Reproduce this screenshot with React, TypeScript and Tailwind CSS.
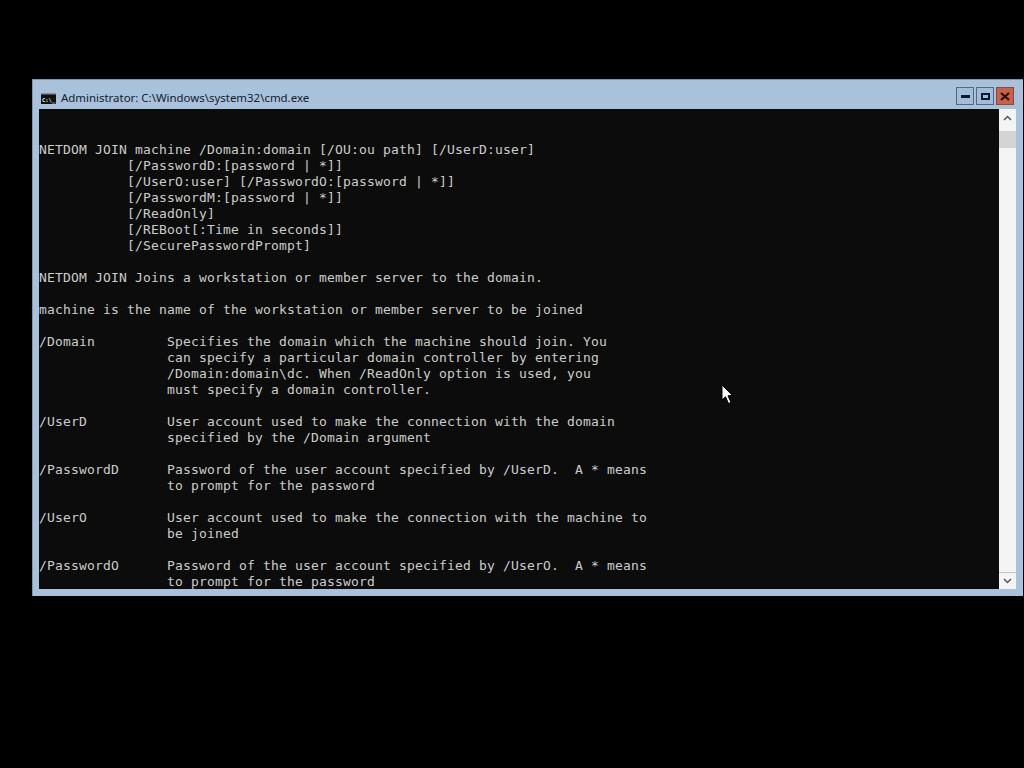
const consoleText = `

NETDOM JOIN machine /Domain:domain [/OU:ou path] [/UserD:user]
           [/PasswordD:[password | *]]
           [/UserO:user] [/PasswordO:[password | *]]
           [/PasswordM:[password | *]]
           [/ReadOnly]
           [/REBoot[:Time in seconds]]
           [/SecurePasswordPrompt]

NETDOM JOIN Joins a workstation or member server to the domain.

machine is the name of the workstation or member server to be joined

/Domain         Specifies the domain which the machine should join. You
                can specify a particular domain controller by entering
                /Domain:domain\\dc. When /ReadOnly option is used, you
                must specify a domain controller.

/UserD          User account used to make the connection with the domain
                specified by the /Domain argument

/PasswordD      Password of the user account specified by /UserD.  A * means
                to prompt for the password

/UserO          User account used to make the connection with the machine to
                be joined

/PasswordO      Password of the user account specified by /UserO.  A * means
                to prompt for the password`;

function CmdIcon() {
  return (
    <svg width="15" height="11" viewBox="0 0 15 11" className="shrink-0">
      <rect x="0" y="0" width="15" height="11" fill="#111" />
      <rect x="0" y="0" width="15" height="1.5" fill="#8a8f96" />
      <text x="1" y="8.5" fill="#e8e8e8" fontSize="5.5" fontFamily="'DejaVu Sans Mono', monospace" fontWeight="700">
        C:\_
      </text>
    </svg>
  );
}

function Cursor() {
  return (
    <svg width="14" height="22" viewBox="0 0 14 22" className="absolute left-[721px] top-[384px]">
      <path d="M1 1 L1 16 L4.5 12.8 L7.5 19.5 L10 18.4 L7 11.8 L11.5 11.5 Z" fill="#fff" stroke="#000" strokeWidth="1" />
    </svg>
  );
}

export default function App() {
  return (
    <div className="relative w-[1024px] h-[768px] overflow-hidden bg-black pt-[79px] pl-[32px]">
      <div className="w-[991px] h-[517px] flex flex-col bg-[#a9c2dc] pl-[6px] pr-[7px] pb-[7px] border-t border-l border-[#7f95ad]">
        <div className="h-[29px] shrink-0 flex items-center justify-between pl-[2px]">
          <div className="flex items-center gap-[5px] pt-[7px]">
            <CmdIcon />
            <span className="font-['Noto_Sans',sans-serif] text-[11.45px] leading-[16px] text-[#14202c]">
              Administrator: C:\Windows\system32\cmd.exe
            </span>
          </div>
          <div className="flex items-center gap-[2px] mr-[2px] pt-[3px]">
            <button className="w-[18px] h-[18px] flex items-center justify-center border border-[#4d6a8a] bg-[#a4bcd6]">
              <span className="w-[9px] h-[3px] bg-[#0b1a33]" />
            </button>
            <button className="w-[18px] h-[18px] flex items-center justify-center border border-[#4d6a8a] bg-[#a4bcd6]">
              <span className="w-[9px] h-[7px] border-2 border-[#0b1a33]" />
            </button>
            <button className="w-[18px] h-[18px] flex items-center justify-center border border-[#8c4a3c] bg-[#c9604a]">
              <svg width="10" height="9" viewBox="0 0 10 9">
                <path d="M1 1 L9 8 M9 1 L1 8" stroke="#2a0d08" strokeWidth="2.2" />
              </svg>
            </button>
          </div>
        </div>
        <div className="flex-1 flex min-h-0">
          <pre className="flex-1 overflow-hidden bg-[#0c0c0c] pt-px font-['DejaVu_Sans_Mono',monospace] text-[13px] leading-[16px] tracking-[0.175px] text-[#cccccc]">
            {consoleText}
          </pre>
          <div className="w-[17px] shrink-0 flex flex-col bg-[#f4f4f4]">
            <div className="h-[17px] flex items-center justify-center">
              <svg width="9" height="6" viewBox="0 0 9 6">
                <path d="M1 5 L4.5 1.5 L8 5" fill="none" stroke="#555" strokeWidth="1.5" />
              </svg>
            </div>
            <div className="h-[17px] bg-[#d4d4d4] mt-[5px]" />
            <div className="flex-1" />
            <div className="h-[17px] border-t border-[#c4c4c4] flex items-center justify-center">
              <svg width="9" height="6" viewBox="0 0 9 6">
                <path d="M1 1 L4.5 4.5 L8 1" fill="none" stroke="#555" strokeWidth="1.5" />
              </svg>
            </div>
          </div>
        </div>
      </div>
      <Cursor />
    </div>
  );
}
